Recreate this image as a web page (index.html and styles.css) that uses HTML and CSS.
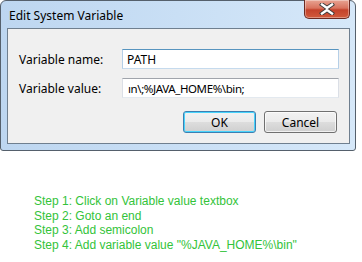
FILE: index.html
```html
<!DOCTYPE html>
<html>
<head>
<meta charset="utf-8">
<link rel="stylesheet" href="styles.css">
</head>
<body>
<div class="window">
  <div class="titlebar">
    <span class="title">Edit System Variable</span>
    <button class="close" aria-label="Close">
      <svg width="16" height="12" viewBox="0 0 16 12">
        <path d="M3 1.5 L8 5 L13 1.5 M3 10.5 L8 7 L13 10.5" fill="none" stroke="#3b3b3b" stroke-width="4.2" stroke-linecap="square"/>
        <path d="M3 1.5 L8 5 L13 1.5 M3 10.5 L8 7 L13 10.5" fill="none" stroke="#ffffff" stroke-width="2.4" stroke-linecap="square"/>
      </svg>
    </button>
  </div>
  <div class="client">
    <div class="row">
      <label class="label">Variable name:</label>
      <div class="field focus"><span class="txt">PATH</span></div>
    </div>
    <div class="row">
      <label class="label">Variable value:</label>
      <div class="field"><span class="txt value">ın\;%JAVA_HOME%\bin;</span></div>
    </div>
    <div class="buttons">
      <button class="btn default">OK</button>
      <button class="btn">Cancel</button>
    </div>
  </div>
</div>
<div class="steps">
  <div>Step 1: Click on Variable value textbox</div>
  <div>Step 2: Goto an end</div>
  <div>Step 3: Add semicolon</div>
  <div>Step 4: Add variable value "%JAVA_HOME%\bin"</div>
</div>
</body>
</html>
```
FILE: styles.css
```css
* { box-sizing: border-box; }
html, body { margin: 0; padding: 0; background: #ffffff; }
body { width: 362px; height: 262px; overflow: hidden; font-family: "Segoe UI", "Noto Sans", sans-serif; }

.window {
  width: 356px;
  height: 151px;
  border: 1px solid #55606c;
  border-radius: 6px 6px 3px 3px;
  background: linear-gradient(90deg, #bdd6f0 0%, #c9dff5 50%, #d6e8f9 100%);
  padding: 0 5px 6px 6px;
  display: flex;
  flex-direction: column;
}
.titlebar {
  height: 27px;
  display: flex;
  align-items: flex-start;
  position: relative;
}
.title {
  font-size: 12px;
  color: #000;
  margin-top: 8px;
  margin-left: 2px;
  line-height: 14px;
}
.close {
  position: absolute;
  right: 0;
  top: -1px;
  width: 46px;
  height: 19px;
  border: 1px solid #6b2a22;
  border-top: none;
  border-radius: 0 0 5px 5px;
  background: linear-gradient(180deg, #e8a493 0%, #d9735e 45%, #c4422b 55%, #d15a3c 100%);
  box-shadow: inset 0 0 0 1px rgba(255,255,255,0.35);
  padding: 0;
  display: flex;
  align-items: center;
  justify-content: center;
}
.close svg { display: block; }

.client {
  flex: 1;
  background: #f0f0f0;
  border: 1px solid #6f7f8f;
  padding: 20px 0 0 0;
  display: flex;
  flex-direction: column;
}
.row {
  display: flex;
  align-items: center;
  height: 20px;
  margin-bottom: 9px;
}
.label {
  width: 114px;
  padding-left: 11px;
  font-size: 12px;
  color: #000;
}
.field {
  width: 217px;
  height: 20px;
  background: #ffffff;
  border: 1px solid #abadb3;
  border-top-color: #a0a4ab;
  border-left-color: #dbdfe6;
  border-right-color: #dbdfe6;
  border-bottom-color: #e3e9ef;
  display: flex;
  align-items: center;
  padding-left: 4px;
  overflow: hidden;
  white-space: nowrap;
}
.field.focus {
  border-color: #5794bf;
  border-left-color: #b5cfe7;
  border-right-color: #b5cfe7;
  border-bottom-color: #c5daed;
}
.txt {
  font-size: 12px;
  color: #000;
}
.txt.value {
  font-size: 11.5px;
  letter-spacing: -0.4px;
  margin-left: 1px;
}

.buttons {
  display: flex;
  gap: 8px;
  padding-left: 175px;
  margin-top: 4px;
}
.btn {
  width: 73px;
  height: 22px;
  font-family: inherit;
  font-size: 12px;
  color: #000;
  border: 1px solid #707070;
  border-radius: 3px;
  background: linear-gradient(180deg, #f2f2f2 0%, #ebebeb 48%, #dddddd 52%, #cfcfcf 100%);
  box-shadow: inset 0 0 0 1px rgba(255,255,255,0.7);
  padding: 0;
}
.btn.default {
  border-color: #3c7fb1;
  box-shadow: inset 0 0 0 1px #48d4fc;
}

.steps {
  margin-top: 43px;
  padding-left: 34px;
  font-family: "Liberation Sans", Arial, sans-serif;
  font-size: 12px;
  line-height: 14.7px;
  color: #33c33a;
}
```
